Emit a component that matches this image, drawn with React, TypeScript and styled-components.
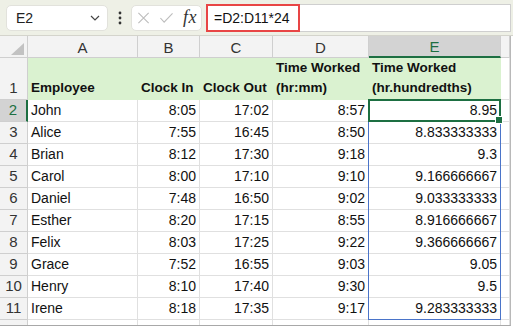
import React from 'react'
import styled, { createGlobalStyle, css } from 'styled-components'

const GREEN = '#1d6f42'
const GRID = '#e0e0e0'
const HEAD_LINE = '#cfcfcf'

const Global = createGlobalStyle`
  html, body { margin: 0; padding: 0; background: #fff; }
  body { font-family: "Liberation Sans", Arial, sans-serif; }
  * { box-sizing: border-box; }
`

const rows = [
  ['John', '8:05', '17:02', '8:57', '8.95'],
  ['Alice', '7:55', '16:45', '8:50', '8.833333333'],
  ['Brian', '8:12', '17:30', '9:18', '9.3'],
  ['Carol', '8:00', '17:10', '9:10', '9.166666667'],
  ['Daniel', '7:48', '16:50', '9:02', '9.033333333'],
  ['Esther', '8:20', '17:15', '8:55', '8.916666667'],
  ['Felix', '8:03', '17:25', '9:22', '9.366666667'],
  ['Grace', '7:52', '16:55', '9:03', '9.05'],
  ['Henry', '8:10', '17:40', '9:30', '9.5'],
  ['Irene', '8:18', '17:35', '9:17', '9.283333333'],
]

const cols = ['A', 'B', 'C', 'D', 'E']

const Page = styled.div`
  width: 513px;
  height: 327px;
  overflow: hidden;
  background: #fff;
`

const TopBar = styled.div`
  height: 36px;
  background: #eef0e6;
  border-bottom: 1px solid #d4d4cc;
  display: flex;
  align-items: center;
  padding: 0 2px 0 6px;
`

const NameBox = styled.div`
  width: 102px;
  height: 26px;
  background: #fff;
  border: 1px solid #e2e2dc;
  border-radius: 5px;
  display: flex;
  align-items: center;
  justify-content: space-between;
  padding: 0 6px 0 9px;
  font-size: 14px;
  color: #222;
`

const Dots = styled.div`
  width: 23px;
  display: flex;
  justify-content: center;
`

const FxBox = styled.div`
  width: 71px;
  height: 26px;
  background: #fff;
  border: 1px solid #e2e2dc;
  border-radius: 5px;
  display: flex;
  align-items: center;
  gap: 9px;
  padding: 0 4px 0 5px;
`

const Fx = styled.span`
  font-family: "Liberation Serif", "Times New Roman", serif;
  font-style: italic;
  font-size: 18px;
  color: #333;
  letter-spacing: 0.5px;
`

const FormulaBar = styled.div`
  flex: 1;
  height: 28px;
  margin-left: 4px;
  background: #fff;
  border: 1px solid #cfcfcf;
  border-left: none;
  display: flex;
  align-items: stretch;
`

const FormulaText = styled.div`
  width: 94px;
  margin: -1px 0;
  border: 2.5px solid #e84545;
  display: flex;
  align-items: center;
  padding-left: 6px;
  font-size: 14px;
  color: #111;
`

const Sheet = styled.div`
  position: relative;
  width: 511px;
  height: 290px;
  overflow: hidden;
  border-right: 1px solid #b8b8b8;
  border-bottom: 1px solid #a8a8a8;
  display: grid;
  grid-template-columns: 28px 110px 62px 73px 96px 132px 1fr;
  grid-template-rows: 22px 42px repeat(11, 22px);
`

const Corner = styled.div`
  background: #f3f3f3;
  border-right: 1px solid ${HEAD_LINE};
  border-bottom: 1px solid ${HEAD_LINE};
  display: flex;
  align-items: flex-end;
  justify-content: flex-end;
  padding: 0 3px 2px 0;
`

const ColHead = styled.div<{ $active?: boolean }>`
  background: ${p => (p.$active ? '#d3d3d3' : '#f3f3f3')};
  color: ${p => (p.$active ? GREEN : '#333')};
  border-right: 1px solid ${HEAD_LINE};
  border-bottom: ${p => (p.$active ? `2px solid ${GREEN}` : `1px solid ${HEAD_LINE}`)};
  font-size: 15px;
  display: flex;
  align-items: center;
  justify-content: center;
  padding-top: 1px;
`

const RowHead = styled.div<{ $active?: boolean; $clipped?: boolean }>`
  background: ${p => (p.$active ? '#d3d3d3' : '#f3f3f3')};
  color: ${p => (p.$active ? GREEN : '#333')};
  border-right: ${p => (p.$active ? `2px solid ${GREEN}` : `1px solid ${HEAD_LINE}`)};
  border-bottom: 1px solid ${HEAD_LINE};
  font-size: 15px;
  display: flex;
  align-items: ${p => (p.$clipped ? 'flex-start' : 'flex-end')};
  justify-content: center;
  padding: ${p => (p.$clipped ? '3px 0 0' : '0 0 2px')};
  line-height: 18px;
`

const Cell = styled.div<{ $num?: boolean; $head?: boolean }>`
  border-right: 1px solid ${GRID};
  border-bottom: 1px solid ${GRID};
  font-size: 14px;
  color: #111;
  white-space: nowrap;
  overflow: hidden;
  display: flex;
  align-items: flex-end;
  justify-content: ${p => (p.$num ? 'flex-end' : 'flex-start')};
  padding: 0 3px 1px;
  line-height: 19px;
  ${p =>
    p.$head &&
    css`
      background: #daf2d0;
      border-color: #daf2d0;
      font-weight: bold;
      font-size: 13.5px;
      white-space: normal;
      line-height: 20px;
      padding-bottom: 1px;
    `}
`

const SpillRange = styled.div`
  position: absolute;
  inset: -1px 0 0 -1px;
  grid-column: 6 / 7;
  grid-row: 3 / 13;
  border: 1px solid #4a74c9;
  pointer-events: none;
  z-index: 1;
`

const ActiveCell = styled.div`
  position: absolute;
  inset: -1px 0 0 -1px;
  grid-column: 6 / 7;
  grid-row: 3 / 4;
  border: 2px solid ${GREEN};
  z-index: 2;
  &::after {
    content: '';
    position: absolute;
    right: -4px;
    bottom: -4px;
    width: 6px;
    height: 6px;
    background: ${GREEN};
    border: 1px solid #fff;
  }
`

const Chevron = () => (
  <svg width="12" height="8" viewBox="0 0 12 8">
    <path d="M2 2 L6 6 L10 2" fill="none" stroke="#444" strokeWidth="1.2" />
  </svg>
)

const VDots = () => (
  <svg width="4" height="14" viewBox="0 0 4 14">
    <circle cx="2" cy="2" r="1.4" fill="#333" />
    <circle cx="2" cy="7" r="1.4" fill="#333" />
    <circle cx="2" cy="12" r="1.4" fill="#333" />
  </svg>
)

const Cross = () => (
  <svg width="14" height="14" viewBox="0 0 14 14">
    <path d="M1.5 1.5 L12.5 12.5 M12.5 1.5 L1.5 12.5" stroke="#bdbdbd" strokeWidth="1.2" fill="none" />
  </svg>
)

const Check = () => (
  <svg width="16" height="14" viewBox="0 0 16 14">
    <path d="M1.5 7 L5.5 11.5 L14.5 2" stroke="#bdbdbd" strokeWidth="1.2" fill="none" />
  </svg>
)

const CornerTriangle = () => (
  <svg width="13" height="12" viewBox="0 0 13 12">
    <path d="M13 0 L13 12 L0 12 Z" fill="#c2c2c2" />
  </svg>
)

export default function App() {
  return (
    <>
      <Global />
      <Page>
        <TopBar>
          <NameBox>
            <span>E2</span>
            <Chevron />
          </NameBox>
          <Dots>
            <VDots />
          </Dots>
          <FxBox>
            <Cross />
            <Check />
            <Fx>fx</Fx>
          </FxBox>
          <FormulaBar>
            <FormulaText>=D2:D11*24</FormulaText>
          </FormulaBar>
        </TopBar>
        <Sheet>
          <Corner>
            <CornerTriangle />
          </Corner>
          {cols.map(c => (
            <ColHead key={c} $active={c === 'E'}>
              {c}
            </ColHead>
          ))}
          <ColHead />

          <RowHead>1</RowHead>
          <Cell $head>Employee</Cell>
          <Cell $head>Clock In</Cell>
          <Cell $head>Clock Out</Cell>
          <Cell $head>Time Worked (hr:mm)</Cell>
          <Cell $head>Time Worked (hr.hundredths)</Cell>
          <Cell />

          {rows.map((r, i) => (
            <React.Fragment key={r[0]}>
              <RowHead $active={i === 0}>{i + 2}</RowHead>
              <Cell>{r[0]}</Cell>
              <Cell $num>{r[1]}</Cell>
              <Cell $num>{r[2]}</Cell>
              <Cell $num>{r[3]}</Cell>
              <Cell $num>{r[4]}</Cell>
              <Cell />
            </React.Fragment>
          ))}

          <RowHead $clipped>12</RowHead>
          {[...cols, 'F'].map(c => (
            <Cell key={c} />
          ))}

          <SpillRange />
          <ActiveCell />
        </Sheet>
      </Page>
    </>
  )
}
